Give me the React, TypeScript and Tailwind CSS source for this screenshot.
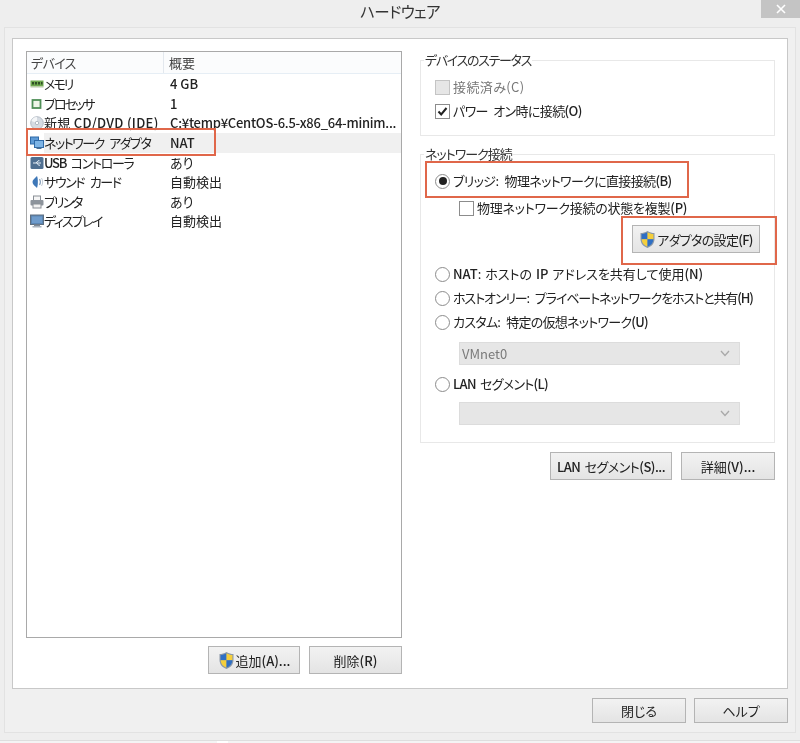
import type { ReactNode } from "react";

const font = "[font-family:'Noto_Sans_CJK_JP','Noto_Sans',sans-serif]";

function Shield() {
  return (
    <svg width="17" height="19" viewBox="0 0 17 19" className="shrink-0">
      <path d="M8.5 1 C6 2.6 4 3 1.5 3 V9 C1.5 13.5 4.5 16.5 8.5 18 C12.5 16.5 15.5 13.5 15.5 9 V3 C13 3 11 2.6 8.5 1Z" fill="#8b98a8" />
      <path d="M8.5 2.2 C6.4 3.5 4.7 3.9 2.6 4 V9.2 H8.5Z" fill="#2f6fc4" />
      <path d="M8.5 2.2 C10.6 3.5 12.3 3.9 14.4 4 V9.2 H8.5Z" fill="#f5cf3c" />
      <path d="M2.6 9.2 H8.5 V16.7 C5.2 15.3 2.8 13 2.6 9.2Z" fill="#f5cf3c" />
      <path d="M14.4 9.2 H8.5 V16.7 C11.8 15.3 14.2 13 14.4 9.2Z" fill="#2f6fc4" />
    </svg>
  );
}

function MemoryIcon() {
  return (
    <svg width="14" height="14" viewBox="0 0 14 14">
      <rect x="0.5" y="3.5" width="13" height="6" fill="#6fa84f" />
      <rect x="2" y="5" width="2" height="2.5" fill="#2f4f25" />
      <rect x="5" y="5" width="2" height="2.5" fill="#2f4f25" />
      <rect x="8" y="5" width="2" height="2.5" fill="#2f4f25" />
      <rect x="11" y="5" width="1.5" height="2.5" fill="#2f4f25" />
      <rect x="0.5" y="9.5" width="13" height="1" fill="#b9c7a8" />
    </svg>
  );
}

function CpuIcon() {
  return (
    <svg width="14" height="14" viewBox="0 0 14 14">
      <rect x="2.5" y="3" width="8" height="8" fill="#eef5e8" stroke="#4f8f57" strokeWidth="1.8" />
    </svg>
  );
}

function DiscIcon() {
  return (
    <svg width="14" height="14" viewBox="0 0 14 14">
      <circle cx="7" cy="7" r="6.3" fill="#d5dbe2" stroke="#b4bcc6" />
      <path d="M7 1 A6 6 0 0 0 1.5 5 L5.5 6.5 A2 2 0 0 1 7 5Z" fill="#f4f6f8" />
      <circle cx="7" cy="7" r="1.7" fill="#fff" stroke="#9aa5b2" strokeWidth="0.7" />
    </svg>
  );
}

function NetworkIcon() {
  return (
    <svg width="14" height="14" viewBox="0 0 14 14">
      <rect x="0.5" y="1" width="8" height="7" fill="#5f9bd6" stroke="#2f6aa8" />
      <rect x="4.5" y="4.5" width="9" height="7" fill="#7db4e6" stroke="#2f6aa8" />
      <rect x="6.5" y="11.5" width="5" height="1.5" fill="#4a6f95" />
    </svg>
  );
}

function UsbIcon() {
  return (
    <svg width="14" height="14" viewBox="0 0 14 14">
      <rect x="0.5" y="1" width="13" height="12" rx="1.5" fill="#4f6f91" />
      <path d="M3 7 H11 M6 7 L8 4.8 H9.5 M7 7 L8.5 9.2 H10" stroke="#e6eef6" strokeWidth="1" fill="none" />
    </svg>
  );
}

function SoundIcon() {
  return (
    <svg width="14" height="14" viewBox="0 0 14 14">
      <path d="M7 1 C4.5 3.5 2.5 5 2.5 7 C2.5 9.5 5 11 7 13 C8.2 10.5 8.2 3.5 7 1Z" fill="#3f78b8" />
      <path d="M9.5 4 C10.6 5.8 10.6 8.2 9.5 10" stroke="#8aa3bd" strokeWidth="1.2" fill="none" />
      <path d="M11.5 3 C13 5.5 13 8.5 11.5 11" stroke="#c3ccd6" strokeWidth="1" fill="none" />
    </svg>
  );
}

function PrinterIcon() {
  return (
    <svg width="14" height="14" viewBox="0 0 14 14">
      <rect x="3.5" y="1" width="7" height="4.5" fill="#f5f5f5" stroke="#8a8f96" />
      <rect x="0.5" y="5" width="13" height="5.5" rx="1" fill="#8d949c" />
      <rect x="3" y="9" width="8" height="4" fill="#f2f2f2" stroke="#8a8f96" />
    </svg>
  );
}

function DisplayIcon() {
  return (
    <svg width="14" height="14" viewBox="0 0 14 14">
      <rect x="0.5" y="1" width="13" height="9.5" fill="#5c86b3" stroke="#5f6f80" />
      <rect x="2" y="2.5" width="10" height="6.5" fill="#6f9ccc" />
      <rect x="4" y="10.5" width="6" height="1.5" fill="#7f8a96" />
      <rect x="2.5" y="12" width="9" height="1.5" fill="#aab3bd" />
    </svg>
  );
}

// latin runs render heavier than the kana in the reference
function L({ children }: { children: ReactNode }) {
  return <span className="font-medium">{children}</span>;
}

const rows: { icon: ReactNode; name: ReactNode; value: ReactNode; selected?: boolean; h: string; t: string }[] = [
  { icon: <MemoryIcon />, name: "メモリ", value: <L>4 GB</L>, h: "h-[20px]", t: "tracking-[-2px]" },
  { icon: <CpuIcon />, name: "プロセッサ", value: <L>1</L>, h: "h-[19px]", t: "tracking-[-2px]" },
  {
    icon: <DiscIcon />,
    name: <>新規 <L>CD/DVD (IDE)</L></>,
    value: <span className="tracking-[-0.25px]"><L>C:¥temp¥CentOS-6.5-x86_64-minim...</L></span>,
    h: "h-[20px]",
    t: "tracking-[0.3px]",
  },
  { icon: <NetworkIcon />, name: "ネットワーク アダプタ", value: <L>NAT</L>, selected: true, h: "h-[20px]", t: "tracking-[-1.5px] [word-spacing:4px]" },
  { icon: <UsbIcon />, name: <><L>USB</L> コントローラ</>, value: "あり", h: "h-[19px]", t: "tracking-[-1.3px] [word-spacing:3px]" },
  { icon: <SoundIcon />, name: "サウンド カード", value: "自動検出", h: "h-[20px]", t: "tracking-[-1.4px] [word-spacing:4px]" },
  { icon: <PrinterIcon />, name: "プリンタ", value: "あり", h: "h-[19px]", t: "tracking-[-2px]" },
  { icon: <DisplayIcon />, name: "ディスプレイ", value: "自動検出", h: "h-[20px]", t: "tracking-[-1.7px]" },
];

function Btn({ children, className }: { children: ReactNode; className: string }) {
  return (
    <button
      type="button"
      className={`flex items-center justify-center whitespace-nowrap border border-[#b4b4b4] bg-gradient-to-b from-[#f2f2f2] to-[#e4e4e4] text-[13px] text-[#222] leading-none ${className}`}
    >
      {children}
    </button>
  );
}

function Radio({ checked }: { checked?: boolean }) {
  return (
    <span className="flex h-[15px] w-[15px] shrink-0 items-center justify-center rounded-full border border-[#8c8c8c] bg-white">
      {checked && <span className="h-[8px] w-[8px] rounded-full bg-[#222]" />}
    </span>
  );
}

function Check({ checked, disabled }: { checked?: boolean; disabled?: boolean }) {
  return (
    <span
      className={`flex h-[15px] w-[15px] shrink-0 items-center justify-center border ${
        disabled ? "border-[#c4c4c4] bg-[#e6e6e6]" : "border-[#8c8c8c] bg-white"
      }`}
    >
      {checked && (
        <svg width="11" height="11" viewBox="0 0 11 11">
          <path d="M1.5 5.5 L4.2 8.5 L9.5 2" stroke="#222" strokeWidth="2" fill="none" />
        </svg>
      )}
    </span>
  );
}

function Select({ value }: { value?: string }) {
  return (
    <div className="flex h-[23px] w-[281px] items-center justify-between border border-[#dcdcdc] bg-[#e6e6e6] pl-[2px] pr-[9px] text-[13px] text-[#7a7a7a]">
      <span>{value}</span>
      <svg width="10" height="7" viewBox="0 0 10 7">
        <path d="M1 1 L5 5.5 L9 1" stroke="#a9a9a9" strokeWidth="1.3" fill="none" />
      </svg>
    </div>
  );
}

function Option({ control, children, className = "", t = "" }: { control: ReactNode; children: ReactNode; className?: string; t?: string }) {
  return (
    <div className={`flex h-[24px] items-center gap-[3px] whitespace-pre text-[13px] ${className}`}>
      {control}
      <span className={t}>{children}</span>
    </div>
  );
}

export default function App() {
  return (
    <div className={`relative flex h-[743px] w-[800px] flex-col overflow-hidden bg-[#eeeeee] text-[#222] blur-[0.4px] [font-feature-settings:'palt'] ${font}`}>
      {/* title bar */}
      <div className="relative flex h-[27px] shrink-0 justify-center pt-[2px] text-[15.5px] leading-[18px] tracking-[-0.6px] text-[#333]">
        ハードウェア
        <div className="absolute right-0 top-0 flex h-[18px] w-[39px] items-center justify-center bg-[#c4c4c4]">
          <svg width="10" height="10" viewBox="0 0 10 10">
            <path d="M1 1 L9 9 M9 1 L1 9" stroke="#fff" strokeWidth="1.6" />
          </svg>
        </div>
      </div>

      {/* dialog body */}
      <div className="ml-[4px] mr-[4px] flex h-[706px] shrink-0 flex-col border border-[#e2e2e2] bg-[#f0f0f0] pl-[7px] pr-[7px] pt-[10px]">
        <div className="flex h-[651px] shrink-0 gap-[18px] border border-[#c8c8c8] bg-white pl-[13px] pt-[12px]">
          {/* device list */}
          <div className="flex w-[376px] shrink-0 flex-col">
            <div className="h-[587px] border border-[#a9a9a9] bg-white">
              <div className="flex h-[22px] items-center border-b border-[#e6eef5] bg-[#fbfcfd] text-[13px] text-[#444]">
                <div className="w-[137px] border-r border-[#e3e8ee] pl-[4px] leading-[21px] tracking-[-0.6px]">デバイス</div>
                <div className="pl-[5px]">概要</div>
              </div>
              {rows.map((r, i) => (
                <div key={i} className={`flex items-center text-[13px] ${r.h}`}>
                  <div className="flex w-[17px] shrink-0 justify-center pl-[3px]">{r.icon}</div>
                  <div className={`flex h-full w-[126px] shrink-0 items-center whitespace-pre ${r.selected ? "bg-[#f0f0f0]" : ""}`}>
                    <span className={r.t}>{r.name}</span>
                  </div>
                  <div className={`flex h-full flex-1 items-center whitespace-nowrap ${r.selected ? "bg-[#f0f0f0]" : ""}`}>
                    {r.value}
                  </div>
                </div>
              ))}
            </div>
            <div className="mt-[8px] flex justify-end gap-[9px]">
              <Btn className="h-[28px] w-[92px] gap-[1px]">
                <Shield />
                <span>追加<L>(A)...</L></span>
              </Btn>
              <Btn className="h-[28px] w-[93px]">
                <span>削除<L>(R)</L></span>
              </Btn>
            </div>
          </div>

          {/* right column */}
          <div className="flex w-[355px] shrink-0 flex-col">
            <fieldset className="-mt-[1px] h-[86px] min-w-0 border border-[#e8e8e8] pl-[14px]">
              <legend className="ml-[-11px] px-[1px] text-[13px] leading-[20px] tracking-[-1.3px] text-[#333]">デバイスのステータス</legend>
              <Option control={<Check disabled />} className="mt-[5px] h-[23px] text-[#777]" t="tracking-[0.4px]">
                接続済み(C)
              </Option>
              <Option control={<Check checked />} className="h-[23px]" t="tracking-[-0.6px] [word-spacing:3px]">
                パワー オン時に接続<L>(O)</L>
              </Option>
            </fieldset>

            <fieldset className="mt-[8px] h-[299px] min-w-0 border border-[#e8e8e8] pl-[14px]">
              <legend className="ml-[-11px] px-[1px] text-[13px] leading-[20px] tracking-[-1px] text-[#333]">ネットワーク接続</legend>
              <Option control={<Radio checked />} className="mt-[5px]" t="tracking-[-0.65px] [word-spacing:4px]">
                ブリッジ: 物理ネットワークに直接接続<L>(B)</L>
              </Option>
              <Option control={<Check />} className="ml-[24px] mt-[3px]" t="tracking-[-0.25px]">
                物理ネットワーク接続の状態を複製<L>(P)</L>
              </Option>
              <div className="mt-[5px] flex justify-end pr-[14px]">
                <Btn className="h-[28px] w-[128px] gap-[1px]">
                  <Shield />
                  <span className="tracking-[-0.7px]">アダプタの設定<L>(F)</L></span>
                </Btn>
              </div>
              <Option control={<Radio />} className="mt-[9px]" t="[word-spacing:1px]">
                <L>NAT</L>: ホストの <L>IP</L> アドレスを共有して使用<L>(N)</L>
              </Option>
              <Option control={<Radio />} t="tracking-[-1.1px] [word-spacing:4px]">
                ホストオンリー: プライベートネットワークをホストと共有<L>(H)</L>
              </Option>
              <Option control={<Radio />} t="tracking-[-0.75px] [word-spacing:4px]">
                カスタム: 特定の仮想ネットワーク<L>(U)</L>
              </Option>
              <div className="ml-[24px] mt-[8px]">
                <Select value="VMnet0" />
              </div>
              <Option control={<Radio />} className="mt-[7px]" t="tracking-[-0.7px] [word-spacing:2px]">
                <L>LAN</L> セグメント<L>(L)</L>
              </Option>
              <div className="ml-[24px] mt-[6px]">
                <Select />
              </div>
            </fieldset>

            <div className="mt-[9px] flex justify-end gap-[9px]">
              <Btn className="h-[28px] w-[122px]">
                <span className="whitespace-pre tracking-[-0.5px] [word-spacing:2px]"><L>LAN</L> セグメント<L>(S)...</L></span>
              </Btn>
              <Btn className="h-[28px] w-[94px]">
                <span>詳細<L>(V)...</L></span>
              </Btn>
            </div>
          </div>
        </div>

        <div className="mt-[9px] flex justify-end gap-[8px]">
          <Btn className="h-[25px] w-[94px]">閉じる</Btn>
          <Btn className="h-[25px] w-[94px]">ヘルプ</Btn>
        </div>
      </div>

      {/* strip under the dialog */}
      <div className="mt-[7px] flex flex-1 border-t border-[#dedede] bg-[#f4f4f4] pl-[217px]">
        <div className="h-full w-[11px] bg-white" />
      </div>

      {/* red annotation boxes */}
      <div className="absolute left-[26px] top-[128px] h-[28px] w-[190px] border-2 border-[#e0674a]" />
      <div className="absolute left-[425px] top-[161px] h-[37px] w-[264px] border-2 border-[#e0674a]" />
      <div className="absolute left-[621px] top-[216px] h-[49px] w-[156px] border-2 border-[#e0674a]" />
    </div>
  );
}
